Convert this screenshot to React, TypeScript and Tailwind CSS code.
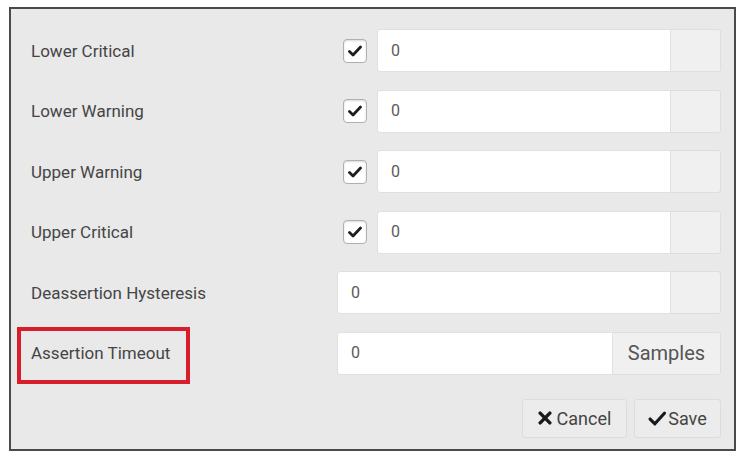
import React from "react";

const font = { fontFamily: "Roboto, 'Liberation Sans', sans-serif" };

function Check() {
  return (
    <svg width="14" height="12" viewBox="0 0 14 12">
      <path d="M1.5 6.5 L5 10 L12.5 2" fill="none" stroke="#1f1f1f" strokeWidth="2.8" strokeLinecap="round" strokeLinejoin="round" />
    </svg>
  );
}

function Row({ label, checkbox, addon, boxed }: { label: string; checkbox?: boolean; addon?: string; boxed?: boolean }) {
  return (
    <div className="flex h-[43px] items-center">
      <div className="relative w-[326px] pl-[20px] pt-[2px] text-[17px] text-[#454545]">
        {boxed && <div className="absolute left-[6px] top-[-12px] h-[57px] w-[173px] border-[4px] border-[#d81e2a]" />}
        <span className="relative">{label}</span>
      </div>
      <div className="flex h-full flex-1 items-center">
        {checkbox && (
          <div className="ml-[6px] mr-[10px] flex h-[24px] w-[24px] items-center justify-center rounded-[4px] border border-[#b0b0b0] bg-white shadow-[inset_0_1px_2px_rgba(0,0,0,0.15)]">
            <Check />
          </div>
        )}
        <div className="flex h-full flex-1 items-center rounded-l-[3px] border border-[#e0e0e0] bg-white pl-[13px] text-[16px] text-[#5a5a5a]">0</div>
        <div
          className={
            "flex h-full items-center justify-center rounded-r-[3px] border border-l-0 border-[#dedede] bg-[#f0f0f0] text-[20px] text-[#555] " +
            (addon ? "w-[108px]" : "w-[50px]")
          }
        >
          {addon}
        </div>
      </div>
    </div>
  );
}

export default function App() {
  return (
    <div className="h-[454px] w-[740px] bg-white pl-[9px] pt-[7px]" style={font}>
      <div className="flex h-[444px] w-[727px] flex-col border-2 border-[#4a4a4a] bg-[#e9e9e9] pr-[13px] pt-[20px]">
        <div className="flex flex-col gap-[17.5px]">
          <Row label="Lower Critical" checkbox />
          <Row label="Lower Warning" checkbox />
          <Row label="Upper Warning" checkbox />
          <Row label="Upper Critical" checkbox />
          <Row label="Deassertion Hysteresis" />
          <Row label="Assertion Timeout" addon="Samples" boxed />
        </div>
        <div className="mt-[24px] flex justify-end gap-[7px]">
          <button className="flex h-[39px] w-[105px] items-center justify-center gap-[5px] rounded-[3px] border border-[#dcdcdc] bg-[#ececec] text-[18px] text-[#444]">
            <svg width="14" height="14" viewBox="0 0 13 13">
              <path d="M2 2 L11 11 M11 2 L2 11" stroke="#1a1a1a" strokeWidth="3.2" strokeLinecap="round" />
            </svg>
            Cancel
          </button>
          <button className="flex h-[39px] w-[87px] items-center justify-center gap-[2px] rounded-[3px] border border-[#dcdcdc] bg-[#ececec] text-[18px] text-[#444]">
            <svg width="18" height="15" viewBox="0 0 17 14">
              <path d="M2 7.5 L6.5 12 L15.5 2" fill="none" stroke="#1a1a1a" strokeWidth="3" strokeLinecap="round" strokeLinejoin="round" />
            </svg>
            Save
          </button>
        </div>
      </div>
    </div>
  );
}
